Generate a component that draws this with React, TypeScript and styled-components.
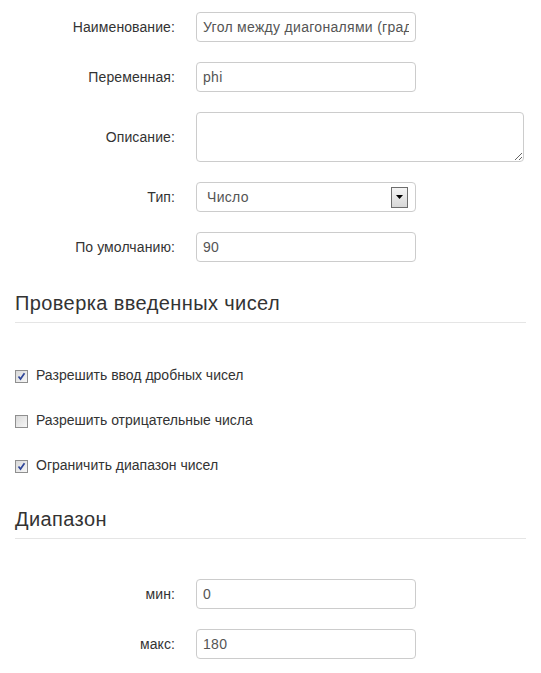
import React from "react";
import styled, { createGlobalStyle } from "styled-components";

const GlobalStyle = createGlobalStyle`
  html, body {
    margin: 0;
    padding: 0;
    background: #fff;
  }
  body {
    font-family: "Liberation Sans", Arial, sans-serif;
    font-size: 14px;
    color: #333;
  }
`;

const fields = [
  { label: "Наименование:", value: "Угол между диагоналями (градусы)" },
  { label: "Переменная:", value: "phi" },
];

const checks = [
  { label: "Разрешить ввод дробных чисел", checked: true },
  { label: "Разрешить отрицательные числа", checked: false },
  { label: "Ограничить диапазон чисел", checked: true },
];

const App = () => {
  return (
    <Page>
      <GlobalStyle />
      <Form>
        {fields.map((f) => (
          <FormRow key={f.label}>
            <Label>{f.label}</Label>
            <TextInput defaultValue={f.value} />
          </FormRow>
        ))}
        <FormRow>
          <Label>Описание:</Label>
          <TextArea />
        </FormRow>
        <FormRow>
          <Label>Тип:</Label>
          <SelectBox>
            <SelectValue>Число</SelectValue>
            <ArrowButton>
              <svg width="7" height="4" viewBox="0 0 7 4">
                <path d="M0 0h7L3.5 4z" fill="#000" />
              </svg>
            </ArrowButton>
          </SelectBox>
        </FormRow>
        <FormRow>
          <Label>По умолчанию:</Label>
          <TextInput defaultValue="90" />
        </FormRow>
      </Form>

      <SectionHeader>Проверка введенных чисел</SectionHeader>

      <CheckList>
        {checks.map((c) => (
          <CheckRow key={c.label}>
            <CheckBox>
              {c.checked && (
                <svg width="9" height="9" viewBox="0 0 9 9">
                  <path
                    d="M1.5 4.5 L3.5 7 L7.5 1.2"
                    fill="none"
                    stroke="#2f4699"
                    strokeWidth="1.7"
                  />
                </svg>
              )}
            </CheckBox>
            <span>{c.label}</span>
          </CheckRow>
        ))}
      </CheckList>

      <SectionHeader>Диапазон</SectionHeader>

      <RangeForm>
        <FormRow>
          <Label>мин:</Label>
          <TextInput defaultValue="0" />
        </FormRow>
        <FormRow>
          <Label>макс:</Label>
          <TextInput defaultValue="180" />
        </FormRow>
      </RangeForm>
    </Page>
  );
};

// Styled components

const Page = styled.div`
  padding: 12px 15px 8px;
`;

const Form = styled.div`
  display: flex;
  flex-direction: column;
  gap: 20px;
`;

const RangeForm = styled(Form)`
  margin-top: 40px;
`;

const FormRow = styled.div`
  display: grid;
  grid-template-columns: 160px 1fr;
  column-gap: 21px;
  align-items: center;
`;

const Label = styled.label`
  text-align: right;
  font-size: 14px;
  font-weight: 400;
  color: #333;
  letter-spacing: 0.1px;
`;

const TextInput = styled.input`
  box-sizing: border-box;
  width: 220px;
  height: 30px;
  padding: 0 6px;
  border: 1px solid #ccc;
  border-radius: 4px;
  font-family: "Liberation Sans", Arial, sans-serif;
  font-size: 14px;
  letter-spacing: 0.3px;
  color: #555;
  background: #fff;
  outline: none;
`;

const TextArea = styled.textarea`
  box-sizing: border-box;
  width: 328px;
  height: 50px;
  padding: 4px 6px;
  border: 1px solid #ccc;
  border-radius: 4px;
  font-family: "Liberation Sans", Arial, sans-serif;
  font-size: 14px;
  color: #555;
  resize: vertical;
  display: block;
  outline: none;
`;

const SelectBox = styled.div`
  box-sizing: border-box;
  width: 220px;
  height: 30px;
  display: flex;
  align-items: center;
  justify-content: space-between;
  padding: 0 7px 0 10px;
  border: 1px solid #ccc;
  border-radius: 4px;
  font-size: 14px;
  letter-spacing: 0.3px;
  color: #555;
`;

const SelectValue = styled.span`
  color: #555;
`;

const ArrowButton = styled.span`
  box-sizing: border-box;
  width: 17px;
  height: 21px;
  display: flex;
  align-items: center;
  justify-content: center;
  border: 1px solid #6d6d6d;
  background: linear-gradient(#f4f4f4, #d8d8d8);
`;

const SectionHeader = styled.h3`
  margin: 30px 0 0;
  padding-bottom: 7px;
  border-bottom: 1px solid #e5e5e5;
  font-size: 20px;
  font-weight: normal;
  letter-spacing: 0.4px;
  line-height: 23px;
  color: #333;
`;

const CheckList = styled.div`
  display: flex;
  flex-direction: column;
  gap: 25px;
  margin: 42px 0 33px;

  & + h3 {
    margin-top: 0;
  }
`;

const CheckRow = styled.label`
  display: flex;
  align-items: center;
  gap: 8px;
  height: 20px;
  font-size: 14px;
  color: #333;
`;

const CheckBox = styled.span`
  box-sizing: border-box;
  width: 13px;
  height: 13px;
  margin-top: 3px;
  display: flex;
  align-items: center;
  justify-content: center;
  border: 1px solid #8f8f8f;
  background: linear-gradient(135deg, #d9d9d9, #f7f7f7);
`;

export default App;
